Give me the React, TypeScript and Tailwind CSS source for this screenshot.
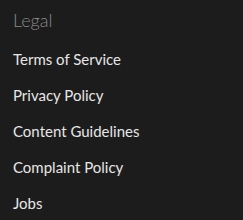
import React from "react";

export default function App() {
  const items = ["Terms of Service", "Privacy Policy", "Content Guidelines", "Complaint Policy", "Jobs"];
  return (
    <div className="w-[243px] h-[220px] bg-[#1c1c1c] px-[13px] pt-[9px]" style={{ fontFamily: "Lato, 'Noto Sans', sans-serif" }}>
      <div className="text-[18px] leading-[22px] text-[#8a8a8a] font-light">Legal</div>
      <ul className="mt-[18px] flex flex-col gap-[16px]">
        {items.map((t) => (
          <li key={t} className="text-[15px] leading-[20px] text-[#e6e6e6]">{t}</li>
        ))}
      </ul>
    </div>
  );
}
